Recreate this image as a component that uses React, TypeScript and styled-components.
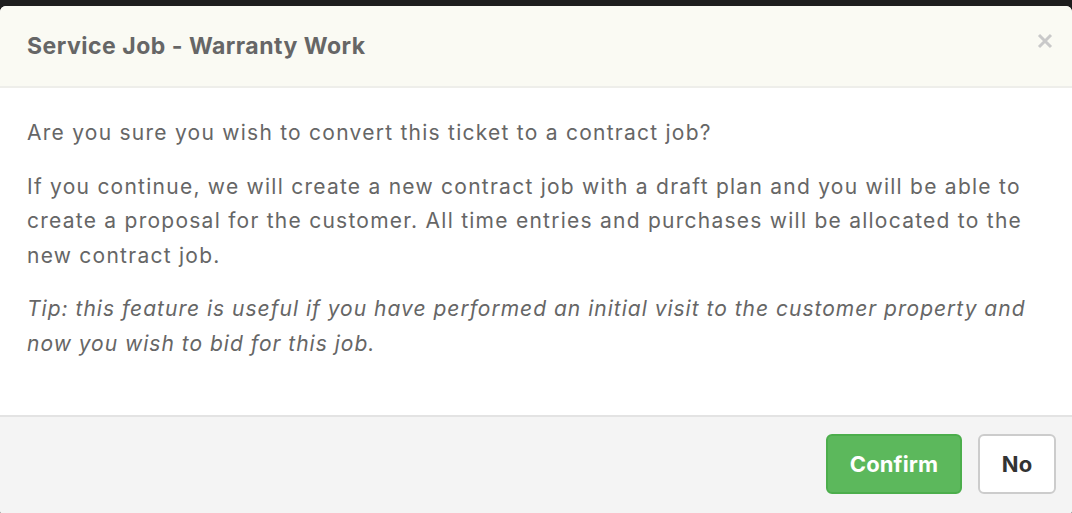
import React from 'react';
import styled, { createGlobalStyle } from 'styled-components';

const GlobalStyle = createGlobalStyle`
  html, body {
    margin: 0;
    padding: 0;
    background: #1e1e1e;
    font-family: Inter, "Open Sans", "Liberation Sans", sans-serif;
  }
`;

const Backdrop = styled.div`
  width: 1072px;
  height: 513px;
  padding-top: 6px;
  box-sizing: border-box;
  overflow: hidden;
`;

const Modal = styled.div`
  display: flex;
  flex-direction: column;
  height: 510px;
  background: #fff;
  border-radius: 6px;
  overflow: hidden;
`;

const Header = styled.div`
  display: flex;
  align-items: center;
  justify-content: space-between;
  height: 80px;
  padding: 0 19px 0 27px;
  background: #fafaf3;
  border-bottom: 2px solid #eeeeea;
`;

const Title = styled.h4`
  margin: 0;
  font-size: 23px;
  font-weight: 700;
  color: #666;
  letter-spacing: 0.5px;
`;

const Close = styled.button`
  display: flex;
  border: 0;
  background: none;
  padding: 0;
  margin-top: -10px;
  cursor: pointer;
`;

const Body = styled.div`
  flex: 1;
  padding: 28px 27px 0;
  color: #666;
  font-size: 21px;
  letter-spacing: 1.25px;
  line-height: 34.5px;
`;

const Para = styled.p<{ $italic?: boolean }>`
  margin: 0 0 19px;
  font-style: ${(p) => (p.$italic ? 'italic' : 'normal')};
  letter-spacing: ${(p) => (p.$italic ? '1px' : 'inherit')};
`;

const Footer = styled.div`
  display: flex;
  justify-content: flex-end;
  gap: 16px;
  height: 101px;
  padding: 17px 16px 0;
  box-sizing: border-box;
  background: #f4f4f4;
  border-top: 2px solid #e3e3e3;
`;

const Button = styled.button<{ $primary?: boolean }>`
  height: 60px;
  width: ${(p) => (p.$primary ? '136px' : '78px')};
  padding: 0;
  border-radius: 6px;
  font-family: inherit;
  font-size: 22px;
  font-weight: 700;
  letter-spacing: 0.1px;
  border: 2px solid ${(p) => (p.$primary ? '#4cae4c' : '#ccc')};
  background: ${(p) => (p.$primary ? '#5cb85c' : '#fff')};
  color: ${(p) => (p.$primary ? '#fff' : '#333')};
  cursor: pointer;
`;

export default function App() {
  return (
    <>
      <GlobalStyle />
      <Backdrop>
        <Modal>
          <Header>
            <Title>Service Job - Warranty Work</Title>
            <Close aria-label="Close">
              <svg width="16" height="16" viewBox="0 0 16 16">
                <path d="M2 2 L14 14 M14 2 L2 14" stroke="#c9c9c9" strokeWidth="3" />
              </svg>
            </Close>
          </Header>
          <Body>
            <Para>Are you sure you wish to convert this ticket to a contract job?</Para>
            <Para>
              If you continue, we will create a new contract job with a draft plan and you will be able to
              create a proposal for the customer. All time entries and purchases will be allocated to the
              new contract job.
            </Para>
            <Para $italic>
              Tip: this feature is useful if you have performed an initial visit to the customer property and
              now you wish to bid for this job.
            </Para>
          </Body>
          <Footer>
            <Button $primary>Confirm</Button>
            <Button>No</Button>
          </Footer>
        </Modal>
      </Backdrop>
    </>
  );
}
